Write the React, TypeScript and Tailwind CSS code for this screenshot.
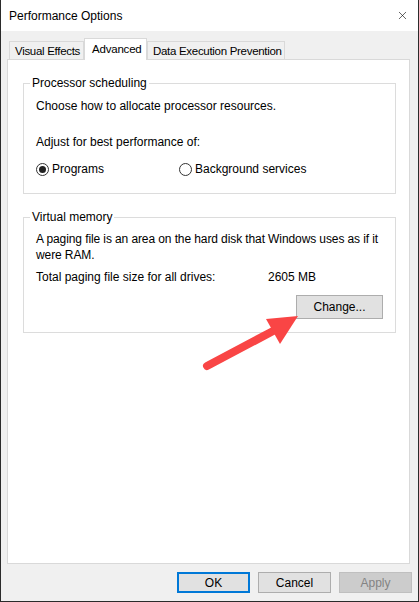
import { X } from "lucide-react";

const Radio = ({ checked, label }: { checked?: boolean; label: string }) => {
  return (
    <label className="flex items-center gap-[3px]">
      <span className="w-[13px] h-[13px] rounded-full border border-[#333] bg-white flex items-center justify-center">
        {checked && <span className="w-[7px] h-[7px] rounded-full bg-[#222]" />}
      </span>
      <span>{label}</span>
    </label>
  );
};

const Tab = ({ label, active, w }: { label: string; active?: boolean; w: string }) => {
  if (active) {
    return (
      <div
        className={`relative z-10 -mb-px h-[22px] bg-white border border-b-0 border-[#d9d9d9] pl-[7px] pt-[2px] whitespace-nowrap text-[11.5px] tracking-[-0.2px] ${w}`}
      >
        {label}
      </div>
    );
  }
  return (
    <div
      className={`h-[18px] border border-b-0 border-[#d9d9d9] pl-[5px] leading-[18px] whitespace-nowrap overflow-hidden text-[11.5px] tracking-[-0.3px] ${w}`}
    >
      {label}
    </div>
  );
};

const WinButton = ({
  children,
  variant = "normal",
}: {
  children: React.ReactNode;
  variant?: "normal" | "default" | "disabled";
}) => {
  const styles = {
    normal: "border border-[#adadad] bg-[#e1e1e1] text-black",
    default: "border-2 border-[#0078d7] bg-[#e1e1e1] text-black",
    disabled: "border border-[#bfbfbf] bg-[#cccccc] text-[#838383]",
  };
  return (
    <button className={`w-[73px] h-[21px] flex items-center justify-center ${styles[variant]}`}>
      {children}
    </button>
  );
};

export default function App() {
  return (
    <div
      className="relative w-[419px] h-[602px] flex flex-col bg-[#f0f0f0] border-x border-b border-[#2b2b2b] text-[12px] leading-[16px] text-black"
      style={{ fontFamily: '"Liberation Sans", Arial, sans-serif' }}
    >
      {/* title bar */}
      <div className="h-[31px] bg-white flex items-center justify-between pl-[8px] pr-[9px]">
        <span className="pt-[1px]">Performance Options</span>
        <X className="w-[13px] h-[13px]" strokeWidth={1.1} />
      </div>

      {/* tabs */}
      <div className="flex items-end pl-[8px] pt-[7px]">
        <Tab label="Visual Effects" w="w-[75px]" />
        <Tab label="Advanced" active w="w-[63px]" />
        <Tab label="Data Execution Prevention" w="w-[138px]" />
      </div>

      {/* panel */}
      <div className="ml-[6px] w-[403px] h-[505px] bg-white border border-[#d9d9d9] pt-[15px] pl-[15px]">
        <fieldset className="w-[373px] border border-[#dcdcdc] px-0 pb-[16px]">
          <legend className="ml-[6px] px-[2px]">Processor scheduling</legend>
          <div className="pl-[12px]">
            <p className="mt-[7px]">Choose how to allocate processor resources.</p>
            <p className="mt-[20px]">Adjust for best performance of:</p>
            <div className="mt-[11px] flex">
              <div className="w-[143px]">
                <Radio checked label="Programs" />
              </div>
              <Radio label="Background services" />
            </div>
          </div>
        </fieldset>

        <fieldset className="mt-[15px] w-[373px] border border-[#dcdcdc] px-0 pb-[13px]">
          <legend className="ml-[6px] px-[2px]">Virtual memory</legend>
          <div className="pl-[12px] pr-[12px]">
            <p className="mt-[6px] whitespace-nowrap tracking-[-0.1px]">
              A paging file is an area on the hard disk that Windows uses as if it
              <br />
              were RAM.
            </p>
            <div className="mt-[6px] flex">
              <span className="w-[232px]">Total paging file size for all drives:</span>
              <span>2605 MB</span>
            </div>
            <div className="mt-[10px] flex justify-end">
              <button className="w-[87px] h-[24px] border border-[#adadad] bg-[#e1e1e1]">
                Change...
              </button>
            </div>
          </div>
        </fieldset>
      </div>

      {/* bottom buttons */}
      <div className="mt-[8px] flex justify-end gap-[8px] pr-[6px]">
        <WinButton variant="default">OK</WinButton>
        <WinButton>Cancel</WinButton>
        <WinButton variant="disabled">Apply</WinButton>
      </div>

      {/* annotation arrow */}
      <svg
        className="absolute left-0 top-0 pointer-events-none"
        width="419"
        height="602"
        viewBox="0 0 419 602"
      >
        <line
          x1="206"
          y1="366"
          x2="274"
          y2="330"
          stroke="#f94545"
          strokeWidth="8"
          strokeLinecap="round"
        />
        <polygon points="297,316 265,319 279,344" fill="#f94545" />
      </svg>
    </div>
  );
}
